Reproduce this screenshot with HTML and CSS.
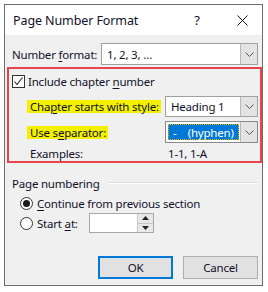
FILE: index.html
```html
<!DOCTYPE html>
<html lang="en">

<head>
    <meta charset="UTF-8">
    <title>Page Number Format</title>
    <link rel="stylesheet" href="styles.css">
</head>

<body>
    <div class="dialog">
        <div class="titlebar">
            <span class="title">Page Number Format</span>
            <span class="help">?</span>
            <span class="close">
                <svg width="11" height="11" viewBox="0 0 11 11"><path d="M0.5 0.5 L10.5 10.5 M10.5 0.5 L0.5 10.5" stroke="#111" stroke-width="1" fill="none"/></svg>
            </span>
        </div>

        <div class="content">
            <div class="row format-row">
                <span class="label">Number <u>f</u>ormat:</span>
                <div class="combo combo-wide">
                    <span class="value">1, 2, 3, …</span>
                    <span class="arrow"><svg width="9" height="5" viewBox="0 0 9 5"><path d="M0.5 0.5 L4.5 4.5 L8.5 0.5" stroke="#555" fill="none"/></svg></span>
                </div>
            </div>

            <div class="chapter-box">
                <div class="check-row">
                    <span class="checkbox">
                        <svg width="11" height="11" viewBox="0 0 11 11"><path d="M1.5 5.5 L4 8.5 L9.5 1.5" stroke="#222" stroke-width="1.1" fill="none"/></svg>
                    </span>
                    <span>Include chapter <u>n</u>umber</span>
                </div>

                <div class="row style-row">
                    <span class="mark">Cha<u>p</u>ter starts with style:</span>
                    <div class="combo">
                        <span class="value">Heading 1</span>
                        <span class="arrow"><svg width="9" height="5" viewBox="0 0 9 5"><path d="M0.5 0.5 L4.5 4.5 L8.5 0.5" stroke="#555" fill="none"/></svg></span>
                    </div>
                </div>

                <div class="row sep-row">
                    <span class="mark">Use s<u>e</u>parator:</span>
                    <div class="combo combo-focus">
                        <span class="value"><span class="selected">-&nbsp;&nbsp;&nbsp;&nbsp;(hyphen)</span></span>
                        <span class="arrow"><svg width="9" height="5" viewBox="0 0 9 5"><path d="M0.5 0.5 L4.5 4.5 L8.5 0.5" stroke="#555" fill="none"/></svg></span>
                    </div>
                </div>

                <div class="row examples">
                    <span class="ex-label">Examples:</span>
                    <span class="ex-value">1-1, 1-A</span>
                </div>
            </div>

            <div class="group-title">
                <span>Page numbering</span>
                <span class="rule"></span>
            </div>

            <div class="radio-row">
                <span class="radio checked"></span>
                <span><u>C</u>ontinue from previous section</span>
            </div>
            <div class="radio-row">
                <span class="radio"></span>
                <span class="start-label">Start <u>a</u>t:</span>
                <div class="spin">
                    <span class="spin-field"></span>
                    <span class="spin-btns">
                        <span class="spin-btn"><svg width="7" height="4" viewBox="0 0 7 4"><path d="M0 4 L3.5 0 L7 4 Z" fill="#222"/></svg></span>
                        <span class="spin-btn"><svg width="7" height="4" viewBox="0 0 7 4"><path d="M0 0 L3.5 4 L7 0 Z" fill="#222"/></svg></span>
                    </span>
                </div>
            </div>

            <div class="buttons">
                <div class="btn btn-default">OK</div>
                <div class="btn">Cancel</div>
            </div>
        </div>
    </div>
</body>

</html>
```

FILE: styles.css
```css
* {
    box-sizing: border-box;
}

body {
    margin: 0;
    background: #ffffff;
    font-family: "Noto Sans", sans-serif;
    font-size: 11.5px;
    letter-spacing: -0.2px;
    color: #10102a;
    white-space: nowrap;
}

u {
    text-decoration-thickness: 1px;
    text-underline-offset: 2px;
}

.dialog {
    margin: 4px;
    width: 259px;
    height: 282px;
    border: 1px solid #6d6d6d;
    background: #f0f0f0;
    display: flex;
    flex-direction: column;
}

.titlebar {
    height: 30px;
    background: #ffffff;
    display: flex;
    align-items: center;
    padding-left: 8px;
}

.title {
    flex: 1;
    font-size: 12.5px;
    letter-spacing: -0.1px;
}

.help {
    width: 20px;
    margin-right: 30px;
    font-size: 13px;
    text-align: center;
}

.close {
    width: 11px;
    height: 11px;
    margin-right: 14px;
    display: flex;
}

.content {
    flex: 1;
    padding: 8px 4px 0 0;
}

.row {
    display: flex;
    align-items: center;
}

.format-row {
    padding-left: 7px;
}

.combo {
    margin-left: auto;
    width: 93px;
    height: 22px;
    border: 1px solid #a0a0a0;
    background: #ffffff;
    display: flex;
}

.combo-wide {
    width: 157px;
}

.combo .value {
    flex: 1;
    display: flex;
    align-items: center;
    padding-left: 5px;
    overflow: hidden;
}

.combo .arrow {
    width: 17px;
    flex: none;
    background: #e3e3e3;
    border-left: 1px solid #b8b8b8;
    display: flex;
    align-items: center;
    justify-content: center;
}

.chapter-box {
    margin: 2px -4px 0 2px;
    height: 96px;
    border: 2px solid #e8454a;
    padding: 6px 2px 0 3px;
}

.check-row {
    display: flex;
    align-items: center;
    height: 13px;
}

.checkbox {
    width: 13px;
    height: 13px;
    border: 1px solid #333;
    background: #ffffff;
    margin-right: 3px;
    display: flex;
    align-items: center;
    justify-content: center;
}

.style-row {
    margin-top: 8px;
    padding-left: 15px;
}

.style-row .combo {
    height: 21px;
}

.sep-row {
    margin-top: 4px;
    padding-left: 15px;
}

.mark {
    background: #f3f000;
    padding: 0 2px 0 3px;
    line-height: 13px;
    height: 13px;
}

.combo-focus {
    border-color: #8a8a8a;
}

.combo-focus .value {
    padding: 2px 1px 2px 2px;
}

.selected {
    display: flex;
    align-items: center;
    width: 100%;
    height: 100%;
    padding-left: 5px;
    background: #0078d7;
    color: #ffffff;
    outline: 1px dotted #e9b400;
    outline-offset: -1px;
}

.examples {
    margin-top: 3px;
    height: 14px;
    padding-left: 18px;
}

.ex-label {
    width: 138px;
}

.group-title {
    display: flex;
    align-items: center;
    margin-top: 12px;
    padding-left: 7px;
    height: 16px;
}

.rule {
    flex: 1;
    margin-left: 8px;
    border-top: 1px solid #dcdcdc;
    border-bottom: 1px solid #ffffff;
}

.radio-row {
    display: flex;
    align-items: center;
    height: 20px;
    padding-left: 15px;
}

.group-title + .radio-row {
    margin-top: 2px;
}

.radio {
    width: 13px;
    height: 13px;
    border: 1px solid #333;
    border-radius: 50%;
    background: #ffffff;
    margin-right: 4px;
    display: flex;
    align-items: center;
    justify-content: center;
}

.radio.checked::after {
    content: "";
    width: 7px;
    height: 7px;
    border-radius: 50%;
    background: #1a1a1a;
}

.start-label {
    width: 52px;
}

.spin {
    width: 65px;
    height: 20px;
    border: 1px solid #a8a8a8;
    background: #ffffff;
    display: flex;
}

.spin-field {
    flex: 1;
}

.spin-btns {
    width: 16px;
    display: flex;
    flex-direction: column;
    border-left: 1px solid #c8c8c8;
}

.spin-btn {
    flex: 1;
    background: #e8e8e8;
    display: flex;
    align-items: center;
    justify-content: center;
}

.spin-btn + .spin-btn {
    border-top: 1px solid #c8c8c8;
}

.buttons {
    display: flex;
    justify-content: flex-end;
    gap: 10px;
    margin-top: 23px;
}

.btn {
    width: 75px;
    height: 23px;
    border: 1px solid #adadad;
    background: #e1e1e1;
    display: flex;
    align-items: center;
    justify-content: center;
}

.btn-default {
    border: 2px solid #0078d7;
}
```
